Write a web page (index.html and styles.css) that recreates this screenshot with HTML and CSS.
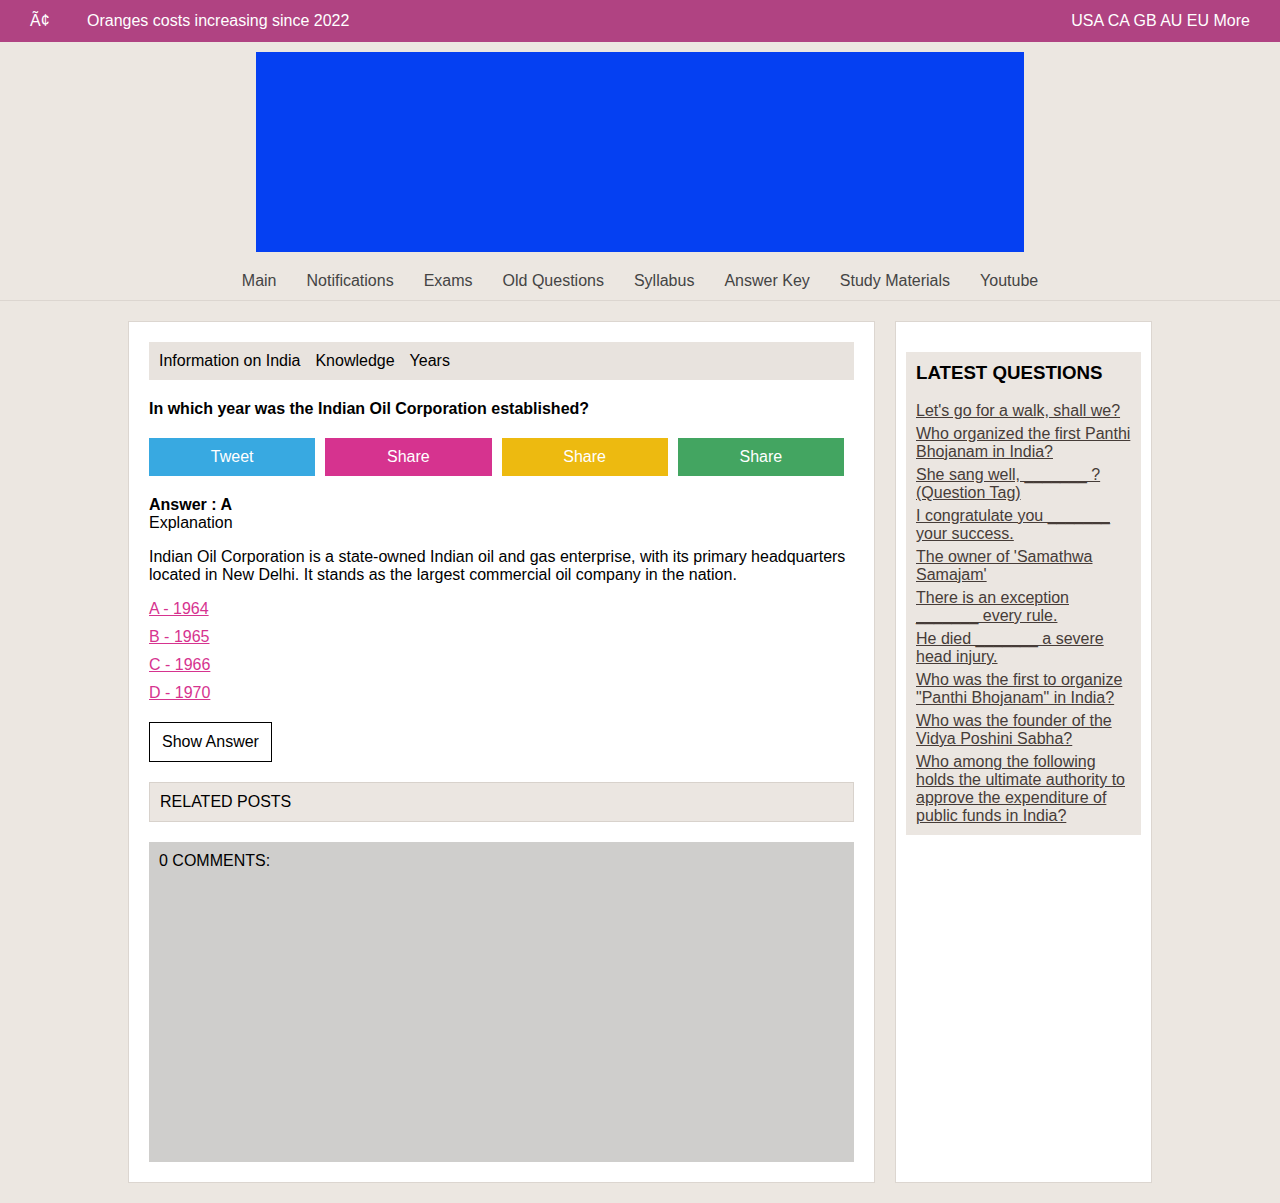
FILE: index.html
```html
<!DOCTYPE html>
<html>
<head>
<meta charset="utf-8">
<link rel="stylesheet" href="styles.css">
</head>
<body>
<div class="topbar">
  <div class="top-left"><span class="logo">Ã¢</span><span class="ticker">Oranges costs increasing since 2022</span></div>
  <div class="top-right">USA CA GB AU EU More</div>
</div>
<div class="banner-wrap"><div class="banner"></div></div>
<nav class="nav">
  <a>Main</a><a>Notifications</a><a>Exams</a><a>Old Questions</a><a>Syllabus</a><a>Answer Key</a><a>Study Materials</a><a>Youtube</a>
</nav>
<div class="layout">
  <main class="card main">
    <div class="crumbs"><span>Information on India</span><span>Knowledge</span><span>Years</span></div>
    <h1 class="question">In which year was the Indian Oil Corporation established?</h1>
    <div class="shares">
      <a class="sb tw">Tweet</a><a class="sb pk">Share</a><a class="sb yl">Share</a><a class="sb gr">Share</a>
    </div>
    <div class="answer"><b>Answer : A</b><br>Explanation</div>
    <p class="expl">Indian Oil Corporation is a state-owned Indian oil and gas enterprise, with its primary headquarters located in New Delhi. It stands as the largest commercial oil company in the nation.</p>
    <div class="opts">
      <a>A - 1964</a><a>B - 1965</a><a>C - 1966</a><a>D - 1970</a>
    </div>
    <button class="show">Show Answer</button>
    <div class="related">RELATED POSTS</div>
    <div class="comments">0 COMMENTS:</div>
  </main>
  <aside class="card side">
    <div class="latest">
      <h2>LATEST QUESTIONS</h2>
      <ul>
        <li><a>Let's go for a walk, shall we?</a></li>
        <li><a>Who organized the first Panthi Bhojanam in India?</a></li>
        <li><a>She sang well, _______ ? (Question Tag)</a></li>
        <li><a>I congratulate you _______ your success.</a></li>
        <li><a>The owner of 'Samathwa Samajam'</a></li>
        <li><a>There is an exception<br>_______ every rule.</a></li>
        <li><a>He died _______ a severe head injury.</a></li>
        <li><a>Who was the first to organize "Panthi Bhojanam" in India?</a></li>
        <li><a>Who was the founder of the Vidya Poshini Sabha?</a></li>
        <li><a>Who among the following holds the ultimate authority to approve the expenditure of public funds in India?</a></li>
      </ul>
    </div>
  </aside>
</div>
</body>
</html>
```
FILE: styles.css
```css
* { box-sizing: border-box; }
body {
  margin: 0;
  background: #ece7e1;
  font-family: "Liberation Sans", Arial, sans-serif;
  color: #000;
}
.topbar {
  height: 42px;
  background: #b04382;
  color: #fff;
  display: flex;
  align-items: center;
  justify-content: space-between;
  padding: 0 30px;
  font-size: 16px;
}
.top-left { display: flex; align-items: center; }
.logo { width: 57px; }
.banner-wrap { display: flex; justify-content: center; padding-top: 10px; }
.banner { width: 768px; height: 200px; background: #0540f2; }
.nav {
  display: flex;
  justify-content: center;
  height: 49px;
  align-items: center;
  padding-top: 10px;
  border-bottom: 1px solid #dcd6d0;
  font-size: 16px;
}
.nav a { color: #444; padding: 0 15px; }
.layout {
  width: 1024px;
  margin: 20px auto 0;
  display: flex;
  gap: 20px;
  align-items: stretch;
}
.card {
  background: #fff;
  border: 1px solid #dcd6d0;
}
.main { width: 747px; padding: 20px; }
.side { width: 257px; padding: 30px 10px; }
.crumbs {
  background: #e8e3de;
  height: 38px;
  display: flex;
  align-items: center;
  padding: 0 10px;
  gap: 15px;
  font-size: 16px;
}
.question {
  font-size: 16px;
  font-weight: bold;
  margin: 20px 0 0;
  line-height: 18px;
}
.shares { display: flex; gap: 10px; margin-top: 20px; padding-right: 10px; }
.sb {
  flex: 1;
  height: 38px;
  display: flex;
  align-items: center;
  justify-content: center;
  color: #fff;
  font-size: 16px;
}
.tw { background: #38a9e1; }
.pk { background: #d6338f; }
.yl { background: #edba10; }
.gr { background: #43a561; }
.answer { margin-top: 20px; font-size: 16px; line-height: 18px; }
.expl { font-size: 16px; line-height: 18px; margin: 16px 0 0; }
.opts { margin-top: 16px; display: flex; flex-direction: column; gap: 10px; }
.opts a { color: #d6338f; text-decoration: underline; font-size: 16px; line-height: 18px; align-self: flex-start; }
.show {
  display: block;
  margin-top: 20px;
  height: 40px;
  padding: 0 12px;
  background: #fff;
  border: 1px solid #000;
  font-family: inherit;
  font-size: 16px;
  color: #000;
}
.related {
  margin-top: 20px;
  height: 40px;
  background: #ebe6e1;
  border: 1px solid #d8d2cc;
  display: flex;
  align-items: center;
  padding: 0 10px;
  font-size: 16px;
}
.comments {
  margin-top: 20px;
  height: 320px;
  background: #cfcecc;
  padding: 10px;
  font-size: 16px;
  line-height: 18px;
}
.latest { background: #ebe6e1; padding: 11px 10px 10px; }
.latest h2 { margin: 0; font-size: 18.7px; line-height: 20px; }
.latest ul { list-style: none; margin: 19px 0 0; padding: 0; display: flex; flex-direction: column; gap: 5px; }
.latest a { color: #463c38; text-decoration: underline; font-size: 16px; line-height: 18px; }
```
